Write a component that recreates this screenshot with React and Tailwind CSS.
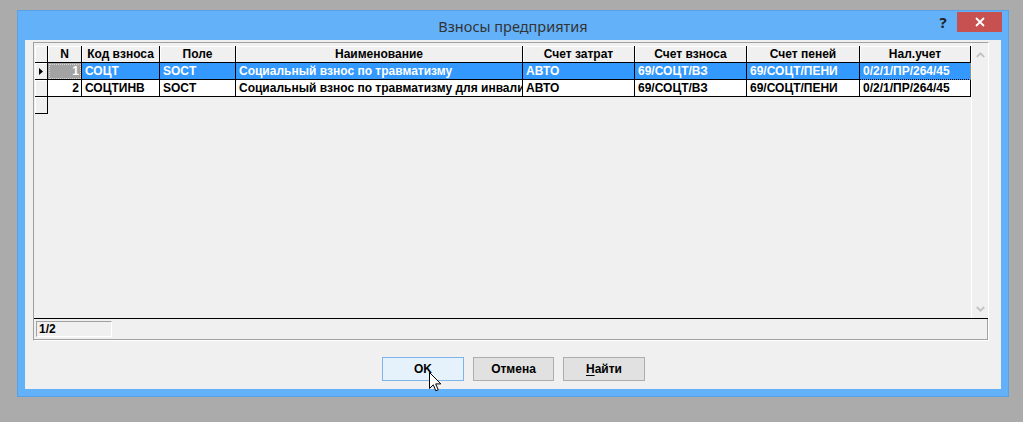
import React from "react";

const cols = "grid-cols-[13px_34px_78px_76px_287px_112px_112px_113px_111px]";
const headers = ["N", "Код взноса", "Поле", "Наименование", "Счет затрат", "Счет взноса", "Счет пеней", "Нал.учет"];
const rows = [
  ["1", "СОЦТ", "SOCT", "Социальный взнос по травматизму", "АВТО", "69/СОЦТ/ВЗ", "69/СОЦТ/ПЕНИ", "0/2/1/ПР/264/45"],
  ["2", "СОЦТИНВ", "SOCT", "Социальный взнос по травматизму для инвалидов", "АВТО", "69/СОЦТ/ВЗ", "69/СОЦТ/ПЕНИ", "0/2/1/ПР/264/45"],
];

const indCell =
  "h-[17px] bg-[#f0f0f0] border-r border-b border-black shadow-[inset_1px_1px_0_#ffffff] flex items-center justify-center";

export default function App() {
  return (
    <div
      className="w-[1023px] h-[422px] bg-[#ababab] pl-[17px] pt-[10px] overflow-hidden relative"
      style={{ fontFamily: '"Liberation Sans", Arial, sans-serif' }}
    >
      <div className="w-[992px] h-[387px] bg-[#63b1f9] border border-[#5aa0e4] flex flex-col">
        {/* title bar */}
        <div className="h-[29px] grid grid-cols-[1fr_auto_1fr] items-start">
          <div />
          <div
            className="pt-[5px] text-[14.5px] text-[#333333] leading-[20px]"
            style={{ fontFamily: '"Noto Sans", "Open Sans", sans-serif' }}
          >
            Взносы предприятия
          </div>
          <div className="flex justify-end items-start pr-[6px] pt-[1px]">
            <div className="w-[24px] h-[20px] flex items-center justify-center text-[15px] font-bold text-[#222]" style={{ fontFamily: '"Noto Sans", sans-serif' }}>
              ?
            </div>
            <div className="ml-[2px] w-[45px] h-[20px] bg-[#c75050] flex items-center justify-center">
              <svg width="10" height="10" viewBox="0 0 10 10">
                <path d="M1 1 L9 9 M9 1 L1 9" stroke="#ffffff" strokeWidth="1.8" />
              </svg>
            </div>
          </div>
        </div>
        {/* client */}
        <div className="mx-[7px] mb-[7px] flex-1 bg-[#f0f0f0] pt-[2px] pl-[8px] pr-[12px] flex flex-col">
          <div className="w-[956px] h-[299px] border-t border-l border-[#a0a0a0] border-b border-r border-b-white border-r-white flex flex-col">
            <div className="h-[276px] flex border-b border-black">
              <div className="w-[937px] pt-[3px] pl-[1px]">
                <div className={`grid ${cols} text-[12px] font-bold leading-[16px]`}>
                  <div className={indCell} />
                  {headers.map((h) => (
                    <div
                      key={h}
                      className="h-[17px] bg-[#f0f0f0] border-r border-b border-black shadow-[inset_1px_1px_0_#ffffff] text-center text-[#000] whitespace-nowrap overflow-hidden"
                    >
                      {h}
                    </div>
                  ))}
                  {rows.map((r, i) => {
                    const sel = i === 0;
                    return (
                      <React.Fragment key={i}>
                        <div className={indCell}>
                          {sel && (
                            <svg width="4" height="7" viewBox="0 0 4 7">
                              <path d="M0 0 L4 3.5 L0 7 Z" fill="#000" />
                            </svg>
                          )}
                        </div>
                        {r.map((c, j) => {
                          if (j === 0) {
                            return (
                              <div
                                key={j}
                                className={
                                  sel
                                    ? "h-[17px] bg-[#a3a3a3] text-white text-right pr-[2px] border-r border-b border-black outline-1 outline-dotted outline-[#d8d8d8] -outline-offset-2"
                                    : "h-[17px] bg-white text-black text-right pr-[2px] border-r border-b border-black"
                                }
                              >
                                {c}
                              </div>
                            );
                          }
                          return (
                            <div
                              key={j}
                              className={
                                (sel ? "bg-[#3399ff] text-white " : "bg-white text-black ") +
                                "h-[17px] pl-[3px] border-r border-b border-black whitespace-nowrap overflow-hidden" +
                                (sel && j === 7 ? " border-r-[#e08a3c] border-dotted" : "")
                              }
                            >
                              {c}
                            </div>
                          );
                        })}
                      </React.Fragment>
                    );
                  })}
                  <div className={indCell} />
                </div>
              </div>
              {/* scrollbar */}
              <div className="w-[17px] border-l border-white flex flex-col justify-between items-center pt-[9px] pb-[6px]">
                <svg width="9" height="6" viewBox="0 0 9 6">
                  <path d="M0.8 5 L4.5 1.3 L8.2 5" stroke="#c3c3c3" strokeWidth="1.8" fill="none" />
                </svg>
                <svg width="9" height="6" viewBox="0 0 9 6">
                  <path d="M0.8 1 L4.5 4.7 L8.2 1" stroke="#c3c3c3" strokeWidth="1.8" fill="none" />
                </svg>
              </div>
            </div>
            <div className="flex-1 border-b border-r border-[#a0a0a0] pl-[2px] pt-[2px]">
              <div className="w-[76px] h-[16px] border-t border-l border-[#a0a0a0] border-b border-r border-b-white border-r-white text-[12px] font-bold leading-[14px] pl-[2px] text-black">
                1/2
              </div>
            </div>
          </div>
          {/* buttons */}
          <div className="mt-[16px] flex justify-center gap-[9px] pl-[5px] text-[12px] font-bold text-black">
            <div className="w-[82px] h-[24px] bg-[#e5f1fb] border border-[#7eb4ea] flex items-center justify-center">
              OK
            </div>
            <div className="w-[81px] h-[24px] bg-[#e1e1e1] border border-[#adadad] flex items-center justify-center">
              Отмена
            </div>
            <div className="w-[82px] h-[24px] bg-[#e1e1e1] border border-[#adadad] flex items-center justify-center">
              <span className="underline underline-offset-2">Н</span>айти
            </div>
          </div>
        </div>
      </div>
      {/* mouse cursor */}
      <svg className="absolute left-[429px] top-[372px]" width="13" height="21" viewBox="0 0 13 21">
        <path
          d="M0.5 0.5 L0.5 16.5 L4.3 12.8 L6.8 18.8 L9.2 17.8 L6.7 11.9 L11.8 11.9 Z"
          fill="#ffffff"
          stroke="#000000"
          strokeWidth="1"
          strokeLinejoin="miter"
        />
      </svg>
    </div>
  );
}
